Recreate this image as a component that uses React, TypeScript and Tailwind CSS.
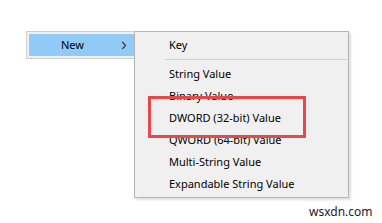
import { useState } from "react";

const items = [
  "String Value",
  "Binary Value",
  "DWORD (32-bit) Value",
  "QWORD (64-bit) Value",
  "Multi-String Value",
  "Expandable String Value",
];

function Chevron() {
  return (
    <svg width="6" height="9" viewBox="0 0 6 9" className="text-[#333]">
      <path d="M1.2 1 L4.6 4.5 L1.2 8" fill="none" stroke="currentColor" strokeWidth="1.1" />
    </svg>
  );
}

export default function App() {
  const [hover, setHover] = useState<string | null>(null);

  return (
    <div
      className="relative h-[223px] w-[382px] overflow-hidden bg-white text-[11px] text-black"
      style={{ fontFamily: '"Noto Sans", "Open Sans", sans-serif' }}
    >
      {/* parent context menu */}
      <div className="ml-[26px] mt-[31px] w-[112px] border border-[#cfcfcf] bg-[#f0f0f0] p-[2px]">
        <div className="flex h-[22px] items-center bg-[#91c9f7] pl-[32px] pr-[6px]">
          <span className="leading-[22px]">New</span>
          <span className="ml-auto mr-[2px] flex items-center">
            <Chevron />
          </span>
        </div>
      </div>

      {/* submenu */}
      <div className="absolute left-[134px] top-[31px] w-[215px] border border-[#b4b4b4] bg-[#f0f0f0] py-[2px] shadow-[2px_2px_2px_rgba(0,0,0,0.12)]">
        <div className="h-[22px] pl-[34px] leading-[22px]">Key</div>
        <div className="flex h-[7px] items-center pl-[30px] pr-[1px]">
          <div className="h-px w-full bg-[#d4d4d4]" />
        </div>
        {items.map((label) => (
          <div
            key={label}
            onMouseEnter={() => setHover(label)}
            onMouseLeave={() => setHover(null)}
            className={`h-[22px] pl-[34px] leading-[22px] ${hover === label ? "bg-[#91c9f7]" : ""}`}
          >
            {label}
          </div>
        ))}
      </div>

      {/* annotation box */}
      <div className="pointer-events-none absolute left-[148px] top-[96px] h-[42px] w-[158px] border-[3px] border-[#e84848]" />

      <div className="absolute left-[309px] top-[203px] text-[12px] text-[#222]">wsxdn.com</div>
    </div>
  );
}
